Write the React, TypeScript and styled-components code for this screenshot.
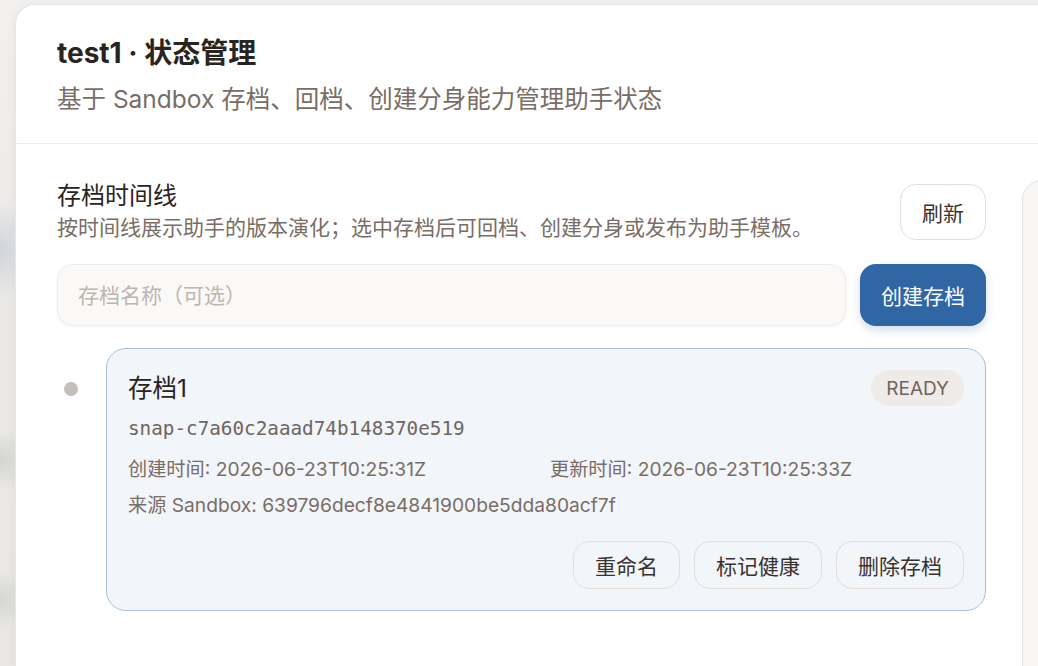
import React from 'react';
import styled, { createGlobalStyle } from 'styled-components';

// ==============================================================================
// Data
// ==============================================================================

interface Snapshot {
  name: string;
  id: string;
  status: string;
  createdAt: string;
  updatedAt: string;
  sandboxId: string;
}

const snapshots: Snapshot[] = [
  {
    name: '存档1',
    id: 'snap-c7a60c2aaad74b148370e519',
    status: 'READY',
    createdAt: '2026-06-23T10:25:31Z',
    updatedAt: '2026-06-23T10:25:33Z',
    sandboxId: '639796decf8e4841900be5dda80acf7f',
  },
];

// ==============================================================================
// Styled Components
// ==============================================================================

const GlobalStyle = createGlobalStyle`
  html, body {
    margin: 0;
    padding: 0;
    height: 100%;
    overflow: hidden;
  }
  body {
    font-family: 'Inter', 'Noto Sans CJK SC', sans-serif;
    color: #2a2420;
    background:
      radial-gradient(ellipse 30px 50px at 0px 250px, rgba(190, 196, 210, 0.6), transparent),
      radial-gradient(ellipse 30px 30px at 0px 460px, rgba(205, 205, 203, 0.8), transparent),
      radial-gradient(ellipse 30px 30px at 0px 600px, rgba(208, 208, 206, 0.8), transparent),
      linear-gradient(180deg, #f2f1f0 0%, #ebeae8 40%, #e9e8e6 100%);
  }
`;

const Screen = styled.div`
  padding: 4px 0 0 15px;
  height: 666px;
  box-sizing: border-box;
`;

const Panel = styled.section`
  width: 1200px;
  height: 100%;
  background: #ffffff;
  border: 1px solid #e8e5e2;
  border-right: none;
  border-bottom: none;
  border-radius: 20px 0 0 0;
  box-shadow: -2px 0 8px rgba(0, 0, 0, 0.04);
  box-sizing: border-box;
`;

const PanelHeader = styled.header`
  padding: 30px 41px 27px;
  border-bottom: 1px solid #efebe8;
`;

const PanelTitle = styled.h1`
  margin: 0;
  font-size: 28px;
  line-height: 36px;
  font-weight: 700;
  color: #2a2420;
`;

const PanelSubtitle = styled.p`
  margin: 12px 0 0;
  font-size: 24.5px;
  line-height: 33px;
  color: #7a6d66;
`;

const PanelBody = styled.div`
  display: grid;
  grid-template-columns: 929px 1fr;
  gap: 36px;
  padding: 36px 0 0 41px;
`;

const Column = styled.div`
  display: flex;
  flex-direction: column;
`;

const SectionHead = styled.div`
  display: flex;
  align-items: center;
  justify-content: space-between;
`;

const SectionTitle = styled.h2`
  margin: 0;
  font-size: 24px;
  line-height: 32px;
  font-weight: 400;
  color: #2a2420;
`;

const SectionHint = styled.p`
  margin: 0;
  font-size: 21px;
  line-height: 32px;
  color: #7a6d66;
`;

const GhostButton = styled.button<{ $tall?: boolean }>`
  height: ${(p) => (p.$tall ? '56px' : '48px')};
  padding: 0 21px;
  border: 1px solid #e4ddd9;
  border-radius: 16px;
  background: ${(p) => (p.$tall ? '#ffffff' : 'transparent')};
  font-family: inherit;
  font-size: 21px;
  color: #3a3230;
  cursor: pointer;
  white-space: nowrap;
`;

const CreateRow = styled.div`
  display: flex;
  gap: 14px;
  margin-top: 20px;
`;

const NameInput = styled.input`
  flex: 1;
  height: 62px;
  padding: 0 20px;
  border: 1px solid #efebe7;
  border-radius: 16px;
  background: #faf9f7;
  box-shadow: 0 1px 3px rgba(60, 40, 30, 0.05);
  font-family: inherit;
  font-size: 21px;
  color: #2a2420;
  box-sizing: border-box;
  outline: none;

  &::placeholder {
    color: #bdb6b1;
  }
`;

const PrimaryButton = styled.button`
  height: 62px;
  padding: 0 21px;
  border: none;
  border-radius: 16px;
  background: #3166a5;
  box-shadow: 0 4px 10px rgba(49, 102, 165, 0.22);
  color: #ffffff;
  font-family: inherit;
  font-size: 21px;
  cursor: pointer;
`;

const Timeline = styled.ol`
  list-style: none;
  margin: 22px 0 0;
  padding: 0;
`;

const TimelineItem = styled.li`
  display: grid;
  grid-template-columns: 28px 1fr;
  gap: 21px;
`;

const Dot = styled.span`
  width: 14px;
  height: 14px;
  margin: 34px 0 0 7px;
  border-radius: 50%;
  background: #c5bfbb;
`;

const SnapshotCard = styled.article`
  padding: 21px 21px 21px;
  border: 1px solid #a9c0dc;
  border-radius: 20px;
  background: #f2f5f9;
`;

const CardTop = styled.div`
  display: flex;
  align-items: center;
  justify-content: space-between;
`;

const CardName = styled.h3`
  margin: 0;
  font-size: 24.5px;
  line-height: 30px;
  font-weight: 400;
  color: #2a2420;
`;

const StatusPill = styled.span`
  height: 36px;
  padding: 0 15px;
  display: inline-flex;
  align-items: center;
  border-radius: 18px;
  background: #efebe8;
  color: #6e6460;
  font-size: 19px;
`;

const SnapshotId = styled.div`
  margin-top: 9px;
  font-family: 'DejaVu Sans Mono', monospace;
  font-size: 19.3px;
  line-height: 27px;
  color: #6f6561;
`;

const MetaGrid = styled.dl`
  display: grid;
  grid-template-columns: 1fr 1fr;
  gap: 9px 8px;
  margin: 14px 0 0;
`;

const MetaItem = styled.dd<{ $wide?: boolean }>`
  margin: 0;
  grid-column: ${(p) => (p.$wide ? '1 / -1' : 'auto')};
  font-size: 19.2px;
  line-height: 27px;
  color: #7a6d66;
`;

const CardActions = styled.div`
  display: flex;
  justify-content: flex-end;
  gap: 14px;
  margin-top: 22px;
`;

const SidePanel = styled.aside`
  height: 600px;
  border: 1px solid #e6e2de;
  border-radius: 20px;
  background: #f8f7f5;
`;

// ==============================================================================
// Main Component
// ==============================================================================

const App: React.FC = () => {
  return (
    <>
      <GlobalStyle />
      <Screen>
        <Panel>
          <PanelHeader>
            <PanelTitle>test1 · 状态管理</PanelTitle>
            <PanelSubtitle>基于 Sandbox 存档、回档、创建分身能力管理助手状态</PanelSubtitle>
          </PanelHeader>

          <PanelBody>
            <Column>
              <SectionHead>
                <div>
                  <SectionTitle>存档时间线</SectionTitle>
                  <SectionHint>按时间线展示助手的版本演化；选中存档后可回档、创建分身或发布为助手模板。</SectionHint>
                </div>
                <GhostButton $tall>刷新</GhostButton>
              </SectionHead>

              <CreateRow>
                <NameInput placeholder="存档名称（可选）" />
                <PrimaryButton>创建存档</PrimaryButton>
              </CreateRow>

              <Timeline>
                {snapshots.map((snap) => (
                  <TimelineItem key={snap.id}>
                    <Dot />
                    <SnapshotCard>
                      <CardTop>
                        <CardName>{snap.name}</CardName>
                        <StatusPill>{snap.status}</StatusPill>
                      </CardTop>
                      <SnapshotId>{snap.id}</SnapshotId>
                      <MetaGrid>
                        <MetaItem>创建时间: {snap.createdAt}</MetaItem>
                        <MetaItem>更新时间: {snap.updatedAt}</MetaItem>
                        <MetaItem $wide>来源 Sandbox: {snap.sandboxId}</MetaItem>
                      </MetaGrid>
                      <CardActions>
                        <GhostButton>重命名</GhostButton>
                        <GhostButton>标记健康</GhostButton>
                        <GhostButton>删除存档</GhostButton>
                      </CardActions>
                    </SnapshotCard>
                  </TimelineItem>
                ))}
              </Timeline>
            </Column>

            <SidePanel />
          </PanelBody>
        </Panel>
      </Screen>
    </>
  );
};

export default App;
